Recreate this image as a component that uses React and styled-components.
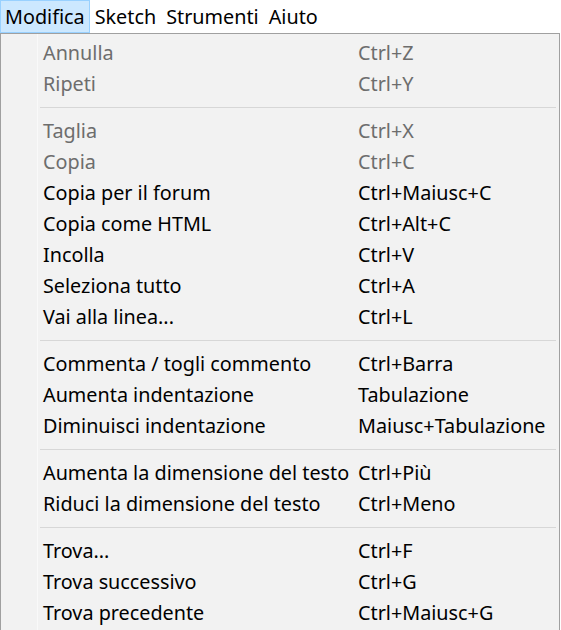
import React from 'react';
import styled, { createGlobalStyle } from 'styled-components';

const GlobalStyle = createGlobalStyle`
  html, body {
    margin: 0;
    padding: 0;
    background: #ffffff;
  }
  body {
    font-family: 'Noto Sans', 'Open Sans', sans-serif;
    font-size: 19.8px;
    color: #000;
  }
`;

const Page = styled.div`
  width: 561px;
  height: 630px;
  overflow: hidden;
  background: #ffffff;
`;

const MenuBar = styled.div`
  display: flex;
  align-items: stretch;
  height: 33px;
  background: #ffffff;
`;

const BarItem = styled.div`
  display: flex;
  align-items: center;
  padding: 0 4px;
  height: 31px;
  border: 1px solid ${(p) => (p.$active ? '#99d1ff' : 'transparent')};
  background: ${(p) => (p.$active ? '#cce8ff' : 'transparent')};
  line-height: 1;
  white-space: nowrap;
`;

const Dropdown = styled.div`
  width: 558px;
  height: 594px;
  border: 1px solid #a0a0a0;
  padding-top: 3px;
  box-sizing: content-box;
  background-color: #f2f2f2;
  background-image: linear-gradient(
    to right,
    transparent 36px,
    #f9f9f9 36px,
    #f9f9f9 37px,
    transparent 37px
  );
  display: flex;
  flex-direction: column;
`;

const Item = styled.div`
  display: grid;
  grid-template-columns: 315px 1fr;
  align-items: center;
  height: 31px;
  line-height: 31px;
  padding-left: 42px;
  color: ${(p) => (p.$disabled ? '#6d6d6d' : '#000000')};
  white-space: nowrap;
`;

const Separator = styled.div`
  height: 16px;
  display: flex;
  align-items: center;
  padding: 0 3px 0 39px;

  &::after {
    content: '';
    flex: 1;
    height: 1px;
    background: #d7d7d7;
  }
`;

const groups = [
  [
    ['Annulla', 'Ctrl+Z', true],
    ['Ripeti', 'Ctrl+Y', true],
  ],
  [
    ['Taglia', 'Ctrl+X', true],
    ['Copia', 'Ctrl+C', true],
    ['Copia per il forum', 'Ctrl+Maiusc+C'],
    ['Copia come HTML', 'Ctrl+Alt+C'],
    ['Incolla', 'Ctrl+V'],
    ['Seleziona tutto', 'Ctrl+A'],
    ['Vai alla linea...', 'Ctrl+L'],
  ],
  [
    ['Commenta / togli commento', 'Ctrl+Barra'],
    ['Aumenta indentazione', 'Tabulazione'],
    ['Diminuisci indentazione', 'Maiusc+Tabulazione'],
  ],
  [
    ['Aumenta la dimensione del testo', 'Ctrl+Più'],
    ['Riduci la dimensione del testo', 'Ctrl+Meno'],
  ],
  [
    ['Trova...', 'Ctrl+F'],
    ['Trova successivo', 'Ctrl+G'],
    ['Trova precedente', 'Ctrl+Maiusc+G'],
  ],
];

export default function App() {
  return (
    <Page>
      <GlobalStyle />
      <MenuBar>
        <BarItem $active>Modifica</BarItem>
        <BarItem>Sketch</BarItem>
        <BarItem>Strumenti</BarItem>
        <BarItem>Aiuto</BarItem>
      </MenuBar>
      <Dropdown>
        {groups.map((group, gi) => (
          <React.Fragment key={gi}>
            {gi > 0 && <Separator />}
            {group.map(([label, shortcut, disabled]) => (
              <Item key={label} $disabled={disabled}>
                <span>{label}</span>
                <span>{shortcut}</span>
              </Item>
            ))}
          </React.Fragment>
        ))}
      </Dropdown>
    </Page>
  );
}
